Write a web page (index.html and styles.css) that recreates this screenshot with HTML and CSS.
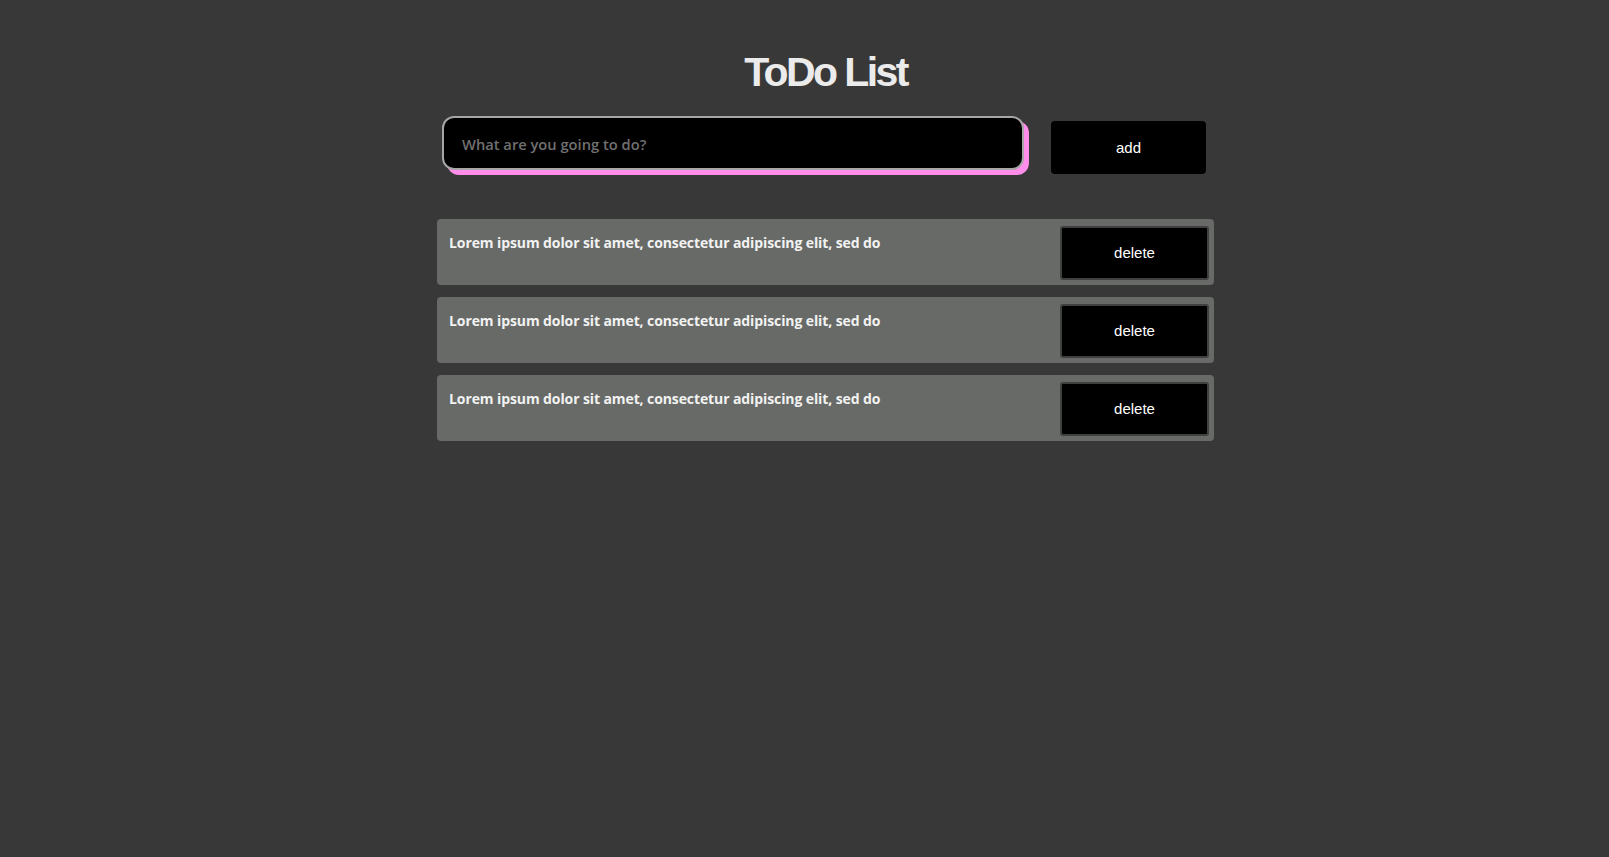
FILE: index.html
```html
<!DOCTYPE html>
<html lang="en">
<head>
<meta charset="utf-8">
<title>ToDo List</title>
<link rel="stylesheet" href="styles.css">
</head>
<body>
<div class="app">
  <h1 class="title">ToDo List</h1>
  <form class="entry">
    <input class="entry-input" type="text" placeholder="What are you going to do?">
    <button class="add-btn" type="button">add</button>
  </form>
  <ul class="todo-list">
    <li class="todo-item">
      <p class="todo-text">Lorem ipsum dolor sit amet, consectetur adipiscing elit, sed do</p>
      <button class="delete-btn" type="button">delete</button>
    </li>
    <li class="todo-item">
      <p class="todo-text">Lorem ipsum dolor sit amet, consectetur adipiscing elit, sed do</p>
      <button class="delete-btn" type="button">delete</button>
    </li>
    <li class="todo-item">
      <p class="todo-text">Lorem ipsum dolor sit amet, consectetur adipiscing elit, sed do</p>
      <button class="delete-btn" type="button">delete</button>
    </li>
  </ul>
</div>
</body>
</html>
```
FILE: styles.css
```css
html, body {
  margin: 0;
  padding: 0;
  background: #383838;
}
body {
  font-family: "Liberation Sans", Arial, sans-serif;
  min-height: 857px;
}
.app {
  width: 819px;
  box-sizing: border-box;
  padding-left: 42px;
  margin: 0 auto;
}
.title {
  margin: 47px 0 0;
  height: 50px;
  line-height: 50px;
  font-size: 41px;
  letter-spacing: -2.6px;
  font-weight: 700;
  text-align: center;
  color: #ebebeb;
}
.entry {
  margin: 19px 0 0;
  display: flex;
  align-items: flex-start;
}
.entry-input {
  margin: 0 0 0 5px;
  width: 582px;
  height: 54px;
  box-sizing: border-box;
  background: #000;
  border: 2px solid #a6a6a6;
  border-radius: 12px;
  box-shadow: 5px 5px 0 #ff8de9;
  padding: 2px 18px 0;
  font-family: "Open Sans", "Noto Sans", sans-serif;
  font-weight: 600;
  font-size: 14.7px;
  color: #ddd;
  outline: none;
}
.entry-input::placeholder {
  color: #707070;
}
.add-btn {
  margin: 5px 0 0 27px;
  width: 155px;
  height: 53px;
  background: #000;
  border: none;
  border-radius: 4px;
  color: #fff;
  font-family: "Liberation Sans", Arial, sans-serif;
  font-size: 15px;
  padding: 0;
}
.todo-list {
  list-style: none;
  margin: 45px 0 0;
  padding: 0;
  display: flex;
  flex-direction: column;
  gap: 12px;
}
.todo-item {
  width: 777px;
  height: 66px;
  box-sizing: border-box;
  background: #686a67;
  border-radius: 4px;
  padding: 7px 5px 0 12px;
  display: flex;
  justify-content: space-between;
  align-items: flex-start;
}
.todo-text {
  margin: 8px 0 0;
  font-family: "Open Sans", "Noto Sans", sans-serif;
  font-weight: 700;
  font-size: 14px;
  letter-spacing: -0.1px;
  line-height: 18px;
  color: #f2f2f2;
}
.delete-btn {
  width: 149px;
  height: 54px;
  box-sizing: border-box;
  background: #000;
  border: 2px solid #404040;
  border-radius: 3px;
  color: #fff;
  font-family: "Liberation Sans", Arial, sans-serif;
  font-size: 15px;
  padding: 0 0 2px;
}
```
